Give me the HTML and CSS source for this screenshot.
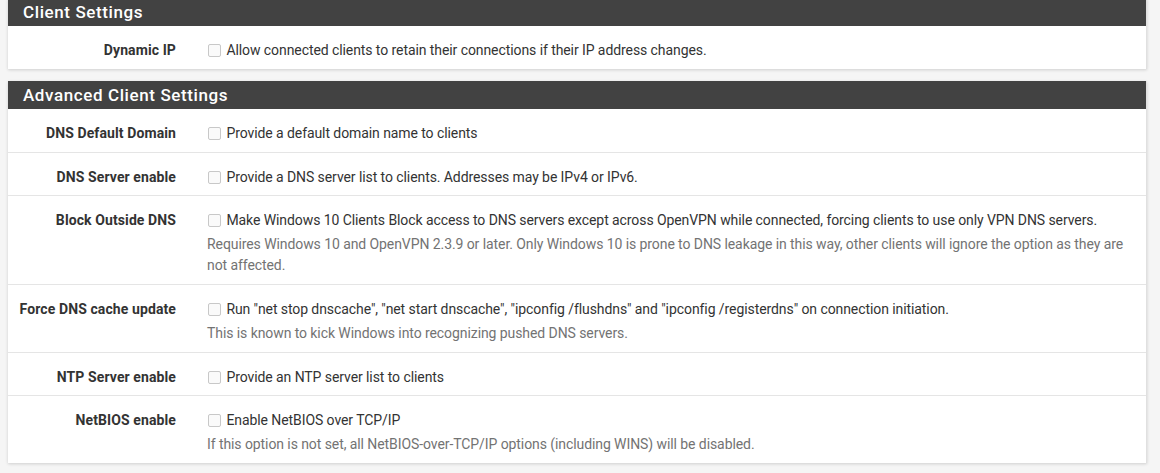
FILE: index.html
```html
<!DOCTYPE html>
<html>
<head>
<meta charset="utf-8">
<link rel="stylesheet" href="styles.css">
</head>
<body>
<div class="page">
  <div class="panel">
    <div class="panel-heading">Client Settings</div>
    <div class="panel-body">
      <div class="row">
        <div class="label">Dynamic IP</div>
        <div class="control">
          <label class="check"><input type="checkbox"> Allow connected clients to retain their connections if their IP address changes.</label>
        </div>
      </div>
    </div>
  </div>
  <div class="panel">
    <div class="panel-heading">Advanced Client Settings</div>
    <div class="panel-body">
      <div class="row">
        <div class="label">DNS Default Domain</div>
        <div class="control">
          <label class="check"><input type="checkbox"> Provide a default domain name to clients</label>
        </div>
      </div>
      <div class="row">
        <div class="label">DNS Server enable</div>
        <div class="control">
          <label class="check"><input type="checkbox"> Provide a DNS server list to clients. Addresses may be IPv4 or IPv6.</label>
        </div>
      </div>
      <div class="row">
        <div class="label">Block Outside DNS</div>
        <div class="control">
          <label class="check"><input type="checkbox"> Make Windows 10 Clients Block access to DNS servers except across OpenVPN while connected, forcing clients to use only VPN DNS servers.</label>
          <div class="help">Requires Windows 10 and OpenVPN 2.3.9 or later. Only Windows 10 is prone to DNS leakage in this way, other clients will ignore the option as they are not affected.</div>
        </div>
      </div>
      <div class="row">
        <div class="label">Force DNS cache update</div>
        <div class="control">
          <label class="check"><input type="checkbox"> Run "net stop dnscache", "net start dnscache", "ipconfig /flushdns" and "ipconfig /registerdns" on connection initiation.</label>
          <div class="help">This is known to kick Windows into recognizing pushed DNS servers.</div>
        </div>
      </div>
      <div class="row">
        <div class="label">NTP Server enable</div>
        <div class="control">
          <label class="check"><input type="checkbox"> Provide an NTP server list to clients</label>
        </div>
      </div>
      <div class="row">
        <div class="label">NetBIOS enable</div>
        <div class="control">
          <label class="check"><input type="checkbox"> Enable NetBIOS over TCP/IP</label>
          <div class="help">If this option is not set, all NetBIOS-over-TCP/IP options (including WINS) will be disabled.</div>
        </div>
      </div>
    </div>
  </div>
</div>
</body>
</html>
```

FILE: styles.css
```css
html, body {
  margin: 0;
  padding: 0;
}
body {
  background: #f5f5f5;
  font-family: Roboto, "Liberation Sans", sans-serif;
  font-size: 14px;
  color: #333;
}
.page {
  padding: 0 13px 0 8px;
  margin-top: -2px;
}
.panel {
  background: #fff;
  box-shadow: 0 1px 3px rgba(0, 0, 0, 0.16);
  margin-bottom: 12px;
  border-right: 1px solid #e0e0e0;
}
.panel-heading {
  background: #424242;
  color: #fff;
  height: 28px;
  line-height: 28px;
  padding-left: 15px;
  font-size: 17px;
  font-weight: 500;
  letter-spacing: 0.6px;
}
.row {
  display: flex;
  padding: 14px 0 8px;
  line-height: 20px;
}
.row:first-child {
  padding-bottom: 9px;
}
.row + .row {
  border-top: 1px solid #e5e5e5;
}
.label {
  width: 168px;
  flex: none;
  text-align: right;
  font-weight: 700;
  letter-spacing: 0.1px;
  color: #333;
}
.control {
  flex: 1;
  padding-left: 31px;
  padding-right: 16px;
  letter-spacing: -0.08px;
}
.check {
  display: block;
  color: #333;
}
.check input {
  appearance: none;
  -webkit-appearance: none;
  width: 13px;
  height: 13px;
  margin: 0 2px 0 1px;
  border: 1px solid #c8c8c8;
  border-radius: 2px;
  background: #fafafa;
  vertical-align: -2px;
}
.help {
  margin-top: 4px;
  line-height: 21px;
  color: #737373;
}
```
